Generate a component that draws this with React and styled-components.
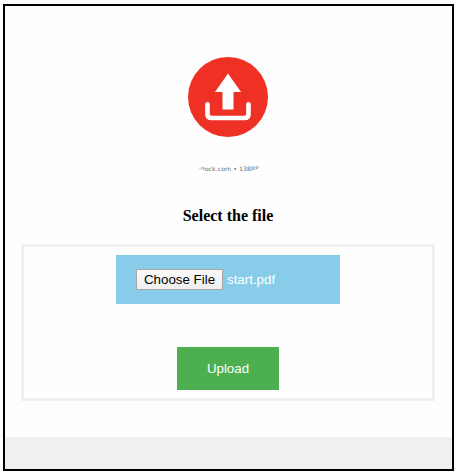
import React from "react";
import styled, { createGlobalStyle } from "styled-components";

const GlobalStyle = createGlobalStyle`
  * { box-sizing: border-box; }
  body { margin: 0; background: #fefefe; }
`;

const Frame = styled.main`
  display: flex;
  flex-direction: column;
  width: 451px;
  height: 467px;
  margin: 4px 0 0 3px;
  border: 2px solid #000;
  background: #fefefe;
  overflow: hidden;
`;

const Content = styled.section`
  display: flex;
  flex-direction: column;
  align-items: center;
  flex: 1;
  padding: 20px 17px 0 16px;
`;

const UploadArt = styled.svg`
  display: block;
  flex: none;
  width: 150px;
  height: 150px;
`;

const Title = styled.h1`
  margin: 31px 0 0;
  font: bold 16px/18px "Liberation Serif", serif;
  color: #000;
`;

const Form = styled.form`
  display: flex;
  flex-direction: column;
  align-items: center;
  gap: 43px;
  width: 414px;
  height: 157px;
  margin-top: 19px;
  padding-top: 8px;
  border: 3px solid #f0f0f0;
`;

const FileField = styled.div`
  display: flex;
  align-items: center;
  gap: 4px;
  width: 224px;
  height: 49px;
  padding-left: 20px;
  background: #87cdea;
  font: 13.33px/15px "Liberation Sans", sans-serif;
  color: #fff;
`;

const ChooseButton = styled.button`
  width: 87px;
  height: 21px;
  padding: 0;
  border: 1px solid #a6a6a6;
  background: linear-gradient(#f9f9f9, #eee);
  font: inherit;
  color: #000;
  white-space: nowrap;
`;

const SubmitButton = styled.button`
  width: 102px;
  height: 43px;
  padding: 0;
  border: 0;
  background: #4caf50;
  font: 13.33px/15px "Liberation Sans", sans-serif;
  color: #fff;
`;

const Footer = styled.footer`
  flex: none;
  height: 32px;
  background: #f0f0f0;
`;

export default function App() {
  return (
    <>
      <GlobalStyle />
      <Frame>
        <Content>
          <UploadArt viewBox="153 26 150 150" aria-hidden="true">
            <defs>
              <clipPath id="round">
                <circle cx="228.5" cy="99" r="75.5" />
              </clipPath>
            </defs>
            <circle cx="228" cy="97" r="40" fill="#ee3124" />
            <path d="M228 73.5 L241 92 H233.5 V109.5 H222.5 V92 H215 Z" fill="#fff" />
            <path
              d="M207.5 104.3 V114 Q207.5 118 211.5 118 H244.5 Q248.5 118 248.5 114 V104.3"
              fill="none"
              stroke="#fff"
              strokeWidth="4.6"
              strokeLinecap="round"
            />
            <text
              x="199"
              y="171"
              textLength="60"
              lengthAdjust="spacingAndGlyphs"
              clipPath="url(#round)"
              fontFamily="'DejaVu Sans', sans-serif"
              fontSize="6"
              fill="#707070"
            >
              stock.com • 13888
            </text>
          </UploadArt>
          <Title>Select the file</Title>
          <Form onSubmit={(event) => event.preventDefault()}>
            <FileField>
              <ChooseButton type="button">Choose File</ChooseButton>
              <span>start.pdf</span>
            </FileField>
            <SubmitButton type="submit">Upload</SubmitButton>
          </Form>
        </Content>
        <Footer />
      </Frame>
    </>
  );
}
